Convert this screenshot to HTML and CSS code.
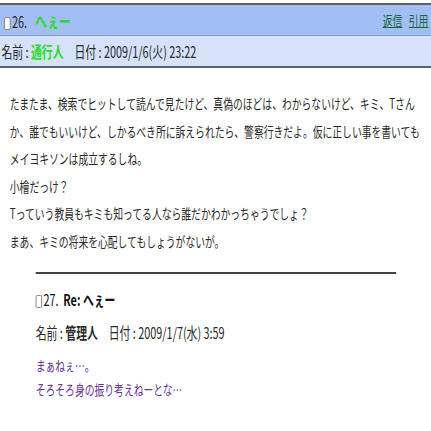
FILE: index.html
```html
<!DOCTYPE html>
<html lang="ja">
<head>
  <meta charset="UTF-8">
  <title>26. へぇー</title>
  <link rel="stylesheet" href="styles.css">
</head>
<body>
  <div class="page">
    <!-- parent post -->
    <div class="post-head">
      <span class="post-title"><input type="checkbox" class="pick">26. <span class="subject">へぇー</span></span>
      <span class="post-links"><a href="#">返信</a> <a href="#">引用</a></span>
    </div>
    <div class="post-meta">名前 : <b class="author">通行人</b>　日付 : 2009/1/6(火) 23:22</div>
    <div class="post-body">
      たまたま、検索でヒットして読んで見たけど、真偽のほどは、わからないけど、キミ、Tさん<br>
      か、誰でもいいけど、しかるべき所に訴えられたら、警察行きだよ。仮に正しい事を書いても<br>
      メイヨキソンは成立するしね。<br>
      小檜だっけ？<br>
      Tっていう教員もキミも知ってる人なら誰だかわかっちゃうでしょ？<br>
      まあ、キミの将来を心配してもしょうがないが。
    </div>

    <!-- reply -->
    <div class="reply">
      <hr class="reply-rule">
      <div class="reply-title"><input type="checkbox" class="pick">27.&nbsp; <b>Re: へぇー</b></div>
      <div class="reply-meta">名前 : <b>管理人</b>　日付 : 2009/1/7(水) 3:59</div>
      <div class="reply-body">
        まぁねぇ…。<br>
        そろそろ身の振り考えねーとな…
      </div>
    </div>
  </div>
</body>
</html>
```

FILE: styles.css
```css
html, body {
  margin: 0;
  padding: 0;
  background-color: #fff;
  overflow: hidden;
}

/* the whole capture is squeezed sideways, so lay out wide and squeeze */
.page {
  width: 616px;
  transform: scaleX(0.7);
  transform-origin: 0 0;
  font-family: "Noto Sans CJK JP", "DejaVu Sans", sans-serif;
  font-size: 14px;
  color: #2a2a2a;
  padding-top: 3px;
}

.post-head {
  display: flex;
  justify-content: space-between;
  align-items: center;
  height: 30px;
  padding: 0 4px 0 6px;
  background-color: #a2bff4;
  border-top: 2px solid #5a5f6a;
  border-bottom: 1px solid #8a97ad;
}

.post-title {
  font-size: 15.5px;
}

.pick {
  appearance: none;
  width: 9px;
  height: 13px;
  margin: 0 2px 0 0;
  border: 1px solid #777;
  border-radius: 2px;
  background-color: #fff;
  vertical-align: -2px;
}

.subject {
  margin-left: 8px;
  font-size: 17px;
  color: #22dd22;
  font-weight: bold;
}

.post-links a {
  color: #116633;
  text-decoration: underline;
  margin-left: 6px;
}

.post-meta {
  height: 30px;
  line-height: 30px;
  padding-left: 2px;
  font-size: 15.5px;
  background-color: #d5e2f9;
  border-bottom: 2px solid #5a5f6a;
}

.author {
  color: #22dd22;
}

.post-body {
  padding: 22px 0 0 14px;
  line-height: 27.5px;
}

.reply {
  padding-left: 51px;
  width: 515px;
}

.reply-rule {
  margin: 17px 0 12px;
  border: 0;
  border-top: 2px solid #444;
}

.reply-title {
  color: #111;
  font-size: 15.5px;
  line-height: 26px;
}

.reply-meta {
  margin-top: 7px;
  font-size: 15.5px;
  line-height: 26px;
}

.reply-body {
  margin-top: 8px;
  line-height: 24px;
  color: #663399;
}
```
